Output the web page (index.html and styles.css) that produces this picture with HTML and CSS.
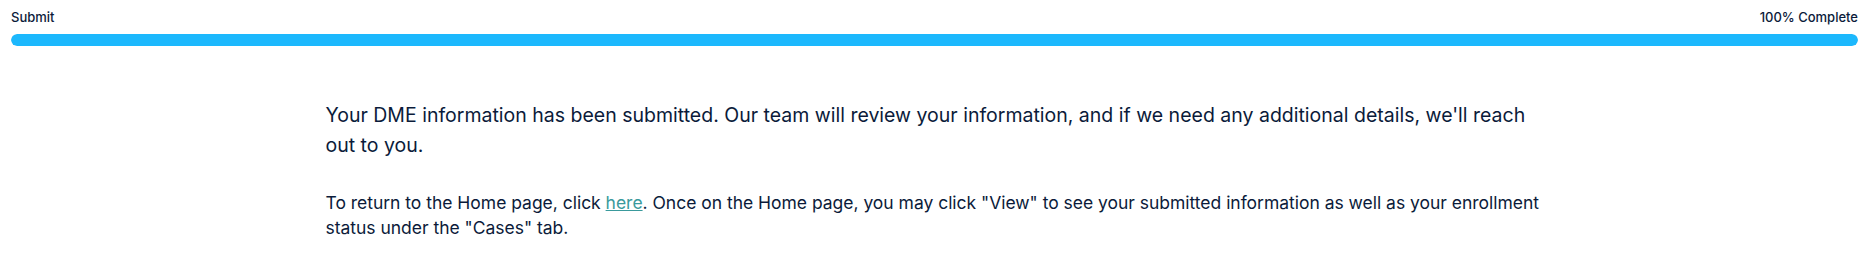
FILE: index.html
```html
<!DOCTYPE html>
<html lang="en">
  <head>
    <meta charset="UTF-8">
    <meta name="viewport" content="width=device-width, initial-scale=1.0">
    <title>DME Submitted</title>
    <link rel="stylesheet" href="styles.css">
  </head>
  <body>
  <header class="progress">
    <div class="progress-labels">
      <span>Submit</span>
      <span>100% Complete</span>
    </div>
    <div class="progress-track">
      <div class="progress-fill" style="width: 100%"></div>
    </div>
  </header>
  <main class="container">
    <p class="lead">Your DME information has been submitted. Our team will review your information, and if we need any additional details, we'll reach out to you.</p>
    <p class="note">To return to the Home page, click <a href="#">here</a>. Once on the Home page, you may click "View" to see your submitted information as well as your enrollment status under the "Cases" tab.</p>
  </main>
  </body>
</html>
```

FILE: styles.css
```css
html, body {
  margin: 0;
  background: #fff;
}
body {
  font-family: Inter, "Noto Sans", sans-serif;
  color: #0b1b3a;
}
.progress {
  padding: 9px 11px 0 11px;
}
.progress-labels {
  display: flex;
  justify-content: space-between;
  font-size: 13px;
  font-weight: 500;
  line-height: 16px;
}
.progress-track {
  margin-top: 9px;
  height: 12px;
  border-radius: 6px;
  background: #e6eef5;
  overflow: hidden;
}
.progress-fill {
  height: 100%;
  border-radius: 6px;
  background: #1cb8fd;
}
.container {
  max-width: 1218px;
  margin: 0 auto;
  padding-top: 54px;
}
.container p {
  margin: 0;
}
.lead {
  font-size: 19.5px;
  line-height: 30px;
}
.container .note {
  margin-top: 30px;
  font-size: 17.5px;
  line-height: 25px;
  letter-spacing: -0.02px;
}
.note a {
  color: #3a9a9c;
  text-decoration: underline;
}
```
